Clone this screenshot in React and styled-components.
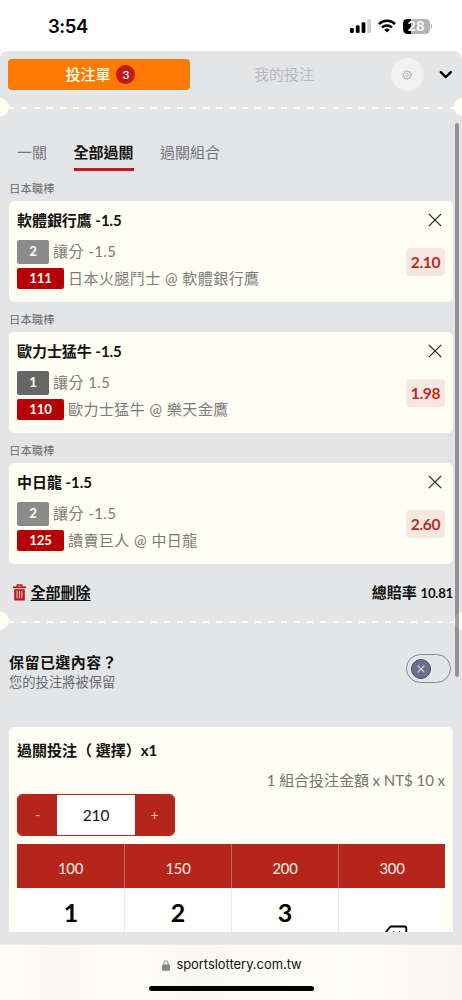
import React from "react";
import styled, { createGlobalStyle, css } from "styled-components";

const Global = createGlobalStyle`
  *, *::before, *::after { box-sizing: border-box; }
  body {
    margin: 0;
    background: #fff;
    font-family: Lato, "Noto Sans CJK TC", sans-serif;
    font-size: 15px;
    color: #111;
    -webkit-font-smoothing: antialiased;
  }
`;

const Screen = styled.div`
  display: flex;
  flex-direction: column;
  width: 462px;
  height: 1000px;
  overflow: hidden;
  background: #fff;
  white-space: nowrap;
`;

const StatusBar = styled.header`
  display: flex;
  justify-content: space-between;
  flex: none;
  height: 51px;
  padding: 0 30px 0 48px;
`;

const Clock = styled.span`
  font: 600 18.5px/53px Inter, sans-serif;
  letter-spacing: -0.4px;
  color: #000;
`;

const StatusIcons = styled.div`
  display: flex;
  align-items: center;
  gap: 7px;
  height: 52px;
`;

const Battery = styled.div`
  display: flex;
  align-items: center;
  gap: 1px;
  &::after {
    content: "";
    width: 1.5px;
    height: 5px;
    border-radius: 0 2px 2px 0;
    background: #b4b4b4;
  }
`;

const BatteryCell = styled.div`
  width: 27px;
  height: 15px;
  border-radius: 4.5px;
  background: linear-gradient(90deg, #000 28%, #b4b4b4 28%);
  color: #fff;
  font: 600 13.5px/15px Inter, sans-serif;
  text-align: center;
`;

const Panel = styled.main`
  position: relative;
  flex: none;
  height: 893px;
  border-radius: 8px 8px 0 0;
  background: #e4e5e7;
  overflow: hidden;
`;

const TopTabs = styled.nav`
  display: flex;
  align-items: center;
  height: 47px;
  padding-left: 8.4px;
`;

const SlipButton = styled.button`
  display: flex;
  align-items: center;
  justify-content: center;
  gap: 6px;
  width: 182px;
  height: 31px;
  padding: 0 0 0 2px;
  border: 0;
  border-radius: 4px;
  background: #ff7a00;
  color: #fff;
  font: 500 15px/31px Lato, "Noto Sans CJK TC", sans-serif;
`;

const Count = styled.span`
  width: 19px;
  height: 19px;
  border-radius: 50%;
  background: #c4181b;
  font-size: 12px;
  line-height: 19px;
  text-align: center;
`;

const MyBets = styled.span`
  width: 187px;
  color: #b9babc;
  text-align: center;
  line-height: 31px;
`;

const SettingsButton = styled.span`
  display: flex;
  align-items: center;
  justify-content: center;
  width: 33px;
  height: 33px;
  margin: 0 15px 0 13.5px;
  border-radius: 50%;
  background: #f1f1f2;
`;

const Perforation = styled.div`
  display: flex;
  align-items: center;
  justify-content: space-between;
  height: 18px;
  margin: 0 -9px;
  &::before, &::after {
    content: "";
    flex: none;
    width: 17.5px;
    height: 18px;
    border-radius: 50%;
    background: #fffef4;
  }
`;

const Dashes = styled.i`
  flex: 1;
  height: 2px;
  margin-top: 2px;
  background: repeating-linear-gradient(90deg, #fffef4 0 5.5px, transparent 5.5px 12.2px, #fffef4 12.2px 13px);
`;

const Modes = styled.nav`
  display: flex;
  gap: 26.5px;
  height: 54.5px;
  padding: 19px 0 0 17px;
`;

const Mode = styled.span`
  height: 35.5px;
  line-height: 35px;
  color: #76777a;
  ${({ $active }) => $active && css`
    color: #111;
    font-weight: 700;
    border-bottom: 3.5px solid #c8161d;
  `}
`;

const League = styled.div`
  height: 30.5px;
  padding: 5px 0 0 9px;
  color: #6a6b6e;
  font-size: 11.4px;
  line-height: 25px;
`;

const BetCard = styled.article`
  display: flex;
  justify-content: space-between;
  height: 100.5px;
  margin: 0 9px;
  padding: 0 8px;
  border-radius: 5px;
  background: #fffef4;
`;

const Pick = styled.h3`
  height: 39px;
  margin: 0;
  font-size: 15px;
  font-weight: 700;
  line-height: 39px;
  letter-spacing: -0.05px;
`;

const Detail = styled.div`
  display: flex;
  align-items: center;
  gap: 4px;
  height: ${({ $short }) => ($short ? "21.5px" : "23.5px")};
  margin-bottom: 4px;
  color: #7b7c79;
  letter-spacing: 0.45px;
  line-height: 21px;
`;

const tones = { light: "#8b8b8b", dark: "#666", red: "#b50005" };

const Tag = styled.b`
  display: flex;
  align-items: center;
  justify-content: center;
  width: ${({ $wide }) => ($wide ? "47px" : "32px")};
  height: 100%;
  border-radius: 2px;
  background: ${({ $tone }) => tones[$tone]};
  color: #fffef4;
  font-size: 13.2px;
  letter-spacing: -0.15px;
`;

const Side = styled.div`
  display: flex;
  flex-direction: column;
  align-items: flex-end;
  gap: 20.5px;
  padding-top: 12px;
`;

const Close = styled.svg`
  width: 14px;
  height: 14px;
  margin-right: 3px;
`;

const Price = styled.b`
  width: 39px;
  height: 28px;
  border-radius: 4px;
  background: #f8e7e0;
  color: #bd2a20;
  font-size: 15.6px;
  letter-spacing: -0.3px;
  line-height: 28px;
  text-align: center;
`;

const SlipFooter = styled.div`
  display: flex;
  justify-content: space-between;
  height: 48.5px;
  padding: 9px 9px 0 13px;
  font-weight: 700;
  line-height: 39px;
`;

const ClearAll = styled.span`
  display: flex;
  align-items: center;
  gap: 4.5px;
  height: 39px;
`;

const Underlined = styled.span`
  text-decoration: underline;
  text-decoration-thickness: 1px;
  text-underline-offset: 2px;
`;

const Odds = styled.span`
  font-size: 15px;
  small { font-size: 13.2px; letter-spacing: -0.25px; }
`;

const KeepRow = styled.section`
  display: flex;
  justify-content: space-between;
  height: 97px;
  padding: 22px 11px 0 9px;
`;

const KeepTitle = styled.div`
  font-size: 15px;
  font-weight: 700;
  letter-spacing: 0.45px;
  line-height: 20px;
`;

const KeepNote = styled.div`
  color: #6a6b6e;
  font-size: 13.3px;
  line-height: 20px;
`;

const Toggle = styled.div`
  width: 45px;
  height: 28.5px;
  margin-top: 2px;
  padding: 3.5px;
  border: 1px solid #8684a0;
  border-radius: 15px;
`;

const Knob = styled.div`
  display: flex;
  align-items: center;
  justify-content: center;
  width: 20px;
  height: 20px;
  border: 1px solid #4b4872;
  border-radius: 50%;
  background: #6f6e8c;
`;

const StakeCard = styled.section`
  height: 205px;
  margin: 0 9px;
  padding: 0 8px;
  border-radius: 5px 5px 0 0;
  background: #fffef4;
  overflow: hidden;
`;

const StakeTitle = styled.h3`
  height: 38px;
  margin: 0;
  font-size: 15px;
  font-weight: 700;
  line-height: 46px;
`;

const StakeNote = styled.div`
  height: 29px;
  color: #74756f;
  letter-spacing: -0.05px;
  line-height: 30px;
  text-align: right;
`;

const Stepper = styled.div`
  display: flex;
  width: 158px;
  height: 42px;
  border: 1px solid #b5251b;
  border-radius: 5px;
  background: #fff;
  overflow: hidden;
`;

const StepButton = styled.span`
  width: 39px;
  background: #b5251b;
  color: #f7cfc6;
  font-size: 14px;
  line-height: 40px;
  text-align: center;
`;

const Amount = styled.span`
  flex: 1;
  font-size: 15.5px;
  letter-spacing: -0.2px;
  line-height: 41px;
  text-align: center;
`;

const Keypad = styled.div`
  display: grid;
  grid-template-columns: repeat(4, 1fr);
  margin-top: 8px;
`;

const Preset = styled.span`
  height: 43.5px;
  background: #b5251b;
  color: #fff2ea;
  font-size: 14.8px;
  letter-spacing: -0.2px;
  line-height: 48px;
  text-align: center;
  & + & { border-left: 1px solid #cf6158; }
`;

const Key = styled.span`
  display: flex;
  justify-content: center;
  height: 54px;
  border-left: 1px solid ${({ $first }) => ($first ? "#fff" : "#f8e4e2")};
  background: #fff;
  color: #000;
  font-size: 25px;
  font-weight: 700;
  line-height: 48px;
`;

const EraseIcon = styled.svg`
  width: 26px;
  height: 20px;
  margin: 37px 0 0 5px;
`;

const ScrollThumb = styled.div`
  position: absolute;
  top: 72px;
  right: 3px;
  width: 4px;
  height: 554px;
  border-radius: 2px;
  background: rgba(80, 80, 84, 0.55);
`;

const BrowserBar = styled.footer`
  display: flex;
  flex-direction: column;
  align-items: center;
  height: 56px;
  border-top: 1px solid #eeede6;
  background: linear-gradient(90deg, #fffef6, #f8f8f0 14%, #fffef6 24%, #f9f8f1 42%, #fffef6 76%, #f6f5ee);
`;

const Address = styled.div`
  display: flex;
  align-items: center;
  gap: 6.5px;
  height: 40px;
  padding-left: 1.5px;
  color: #111;
  font: 400 12.9px/40px Inter, sans-serif;
`;

const HomeIndicator = styled.div`
  width: 165px;
  height: 5.5px;
  margin-top: 0.5px;
  border-radius: 3px;
  background: #000;
`;

const bets = [
  { pick: "軟體銀行鷹 -1.5", side: "2", tone: "light", line: "讓分 -1.5", code: "111", match: "日本火腿鬥士 @ 軟體銀行鷹", price: "2.10" },
  { pick: "歐力士猛牛 -1.5", side: "1", tone: "dark", line: "讓分 1.5", code: "110", match: "歐力士猛牛 @ 樂天金鷹", price: "1.98" },
  { pick: "中日龍 -1.5", side: "2", tone: "light", line: "讓分 -1.5", code: "125", match: "讀賣巨人 @ 中日龍", price: "2.60" },
];

function Bet({ bet }) {
  return (
    <>
      <League>日本職棒</League>
      <BetCard>
        <div>
          <Pick>{bet.pick}</Pick>
          <Detail><Tag $tone={bet.tone}>{bet.side}</Tag>{bet.line}</Detail>
          <Detail $short><Tag $wide $tone="red">{bet.code}</Tag>{bet.match}</Detail>
        </div>
        <Side>
          <Close viewBox="0 0 14 14" fill="none" stroke="#222" strokeWidth="1.2">
            <path d="M.8.8l12.4 12.4M13.2.8L.8 13.2" />
          </Close>
          <Price>{bet.price}</Price>
        </Side>
      </BetCard>
    </>
  );
}

export default function App() {
  return (
    <Screen>
      <Global />
      <StatusBar>
        <Clock>3:54</Clock>
        <StatusIcons>
          <svg width="21" height="14" viewBox="0 0 21 14">
            <rect x="0" y="9" width="3.8" height="5" rx="1.2" />
            <rect x="5.8" y="6.3" width="3.8" height="7.7" rx="1.2" />
            <rect x="11.6" y="3.3" width="3.8" height="10.7" rx="1.2" />
            <rect x="17.2" y="0.3" width="3.8" height="13.7" rx="1.2" fill="#cfcfcf" />
          </svg>
          <svg width="18" height="14" viewBox="0 0 18 14" fill="none" stroke="#000" strokeWidth="2.4">
            <path d="M.9 5.1a11.6 11.6 0 0 1 16.2 0" />
            <path d="M4 8.5a7.2 7.2 0 0 1 10 0" />
            <path d="M9 13.6L6.2 10.8a4.1 4.1 0 0 1 5.6 0z" fill="#000" stroke="none" />
          </svg>
          <Battery><BatteryCell>28</BatteryCell></Battery>
        </StatusIcons>
      </StatusBar>

      <Panel>
        <TopTabs>
          <SlipButton>投注單<Count>3</Count></SlipButton>
          <MyBets>我的投注</MyBets>
          <SettingsButton>
            <svg width="10" height="10" viewBox="0 0 10 10" fill="none" stroke="#b3b3b3">
              <circle cx="5" cy="5" r="4.2" strokeWidth="1.2" strokeDasharray="1.8 .84" />
              <circle cx="5" cy="5" r="3.5" strokeWidth=".7" />
              <circle cx="5" cy="5" r="1.5" strokeWidth=".8" />
            </svg>
          </SettingsButton>
          <svg width="14" height="9" viewBox="0 0 14 9" fill="none" stroke="#000" strokeWidth="2.4" strokeLinecap="round" strokeLinejoin="round">
            <path d="M1.8 2.2l5 4.9 5-4.9" />
          </svg>
        </TopTabs>
        <Perforation><Dashes /></Perforation>
        <Modes>
          <Mode>一關</Mode>
          <Mode $active>全部過關</Mode>
          <Mode>過關組合</Mode>
        </Modes>
        {bets.map((bet) => <Bet key={bet.code} bet={bet} />)}
        <SlipFooter>
          <ClearAll>
            <svg width="13" height="17" viewBox="0 0 13 17" fill="none" stroke="#c0181c">
              <path d="M0 3.3h13" strokeWidth="1.8" />
              <path d="M4.2 3V1h4.6v2" strokeWidth="1.4" />
              <path d="M1.2 5.2h10.6v11.3H1.2z" fill="#c0181c" stroke="none" />
              <path d="M4.1 6.8v7.6M6.5 6.8v7.6M8.9 6.8v7.6" stroke="#f2d9da" strokeWidth="1" />
            </svg>
            <Underlined>全部刪除</Underlined>
          </ClearAll>
          <Odds>總賠率 <small>10.81</small></Odds>
        </SlipFooter>
        <Perforation><Dashes /></Perforation>
        <KeepRow>
          <div>
            <KeepTitle>保留已選內容？</KeepTitle>
            <KeepNote>您的投注將被保留</KeepNote>
          </div>
          <Toggle>
            <Knob>
              <svg width="8" height="8" viewBox="0 0 8 8" stroke="#dddce8" strokeWidth="1.1">
                <path d="M.6.6l6.8 6.8M7.4.6L.6 7.4" />
              </svg>
            </Knob>
          </Toggle>
        </KeepRow>
        <StakeCard>
          <StakeTitle>過關投注（ 選擇）x1</StakeTitle>
          <StakeNote>1 組合投注金額 x NT$ 10 x</StakeNote>
          <Stepper>
            <StepButton>-</StepButton>
            <Amount>210</Amount>
            <StepButton>+</StepButton>
          </Stepper>
          <Keypad>
            <Preset>100</Preset>
            <Preset>150</Preset>
            <Preset>200</Preset>
            <Preset>300</Preset>
            <Key $first>1</Key>
            <Key>2</Key>
            <Key>3</Key>
            <Key>
              <EraseIcon viewBox="0 0 26 20" fill="none" stroke="#000" strokeWidth="1.9" strokeLinejoin="round">
                <path d="M8.5 1.5h14q1.8 0 1.8 1.8v13.4q0 1.8-1.8 1.8h-14L1.5 10z" />
                <path d="M11 6.5l7 7M18 6.5l-7 7" strokeWidth="1.5" />
              </EraseIcon>
            </Key>
          </Keypad>
        </StakeCard>
        <ScrollThumb />
      </Panel>

      <BrowserBar>
        <Address>
          <svg width="8" height="11" viewBox="0 0 8 11" fill="#858585">
            <rect x="0" y="4.6" width="8" height="6.2" rx="1.2" />
            <path d="M1.9 5V3a2.1 2.1 0 0 1 4.2 0v2" fill="none" stroke="#858585" strokeWidth="1" />
          </svg>
          sportslottery.com.tw
        </Address>
        <HomeIndicator />
      </BrowserBar>
    </Screen>
  );
}
